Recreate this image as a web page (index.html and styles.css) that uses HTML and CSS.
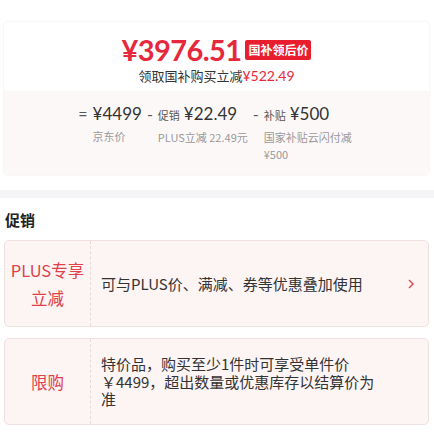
FILE: index.html
```html
<!DOCTYPE html>
<html lang="zh-CN">
<head>
<meta charset="utf-8">
<link rel="stylesheet" href="styles.css">
</head>
<body>
<div class="price-card">
  <div class="price-top">
    <div class="price-line">
      <span class="price">¥3976.51</span>
      <span class="badge">国补领后价</span>
    </div>
    <div class="subline">领取国补购买立减<span class="red">¥522.49</span></div>
  </div>
  <div class="price-bottom">
    <div class="calc">
      <span class="op">=</span>
      <div class="item">
        <div class="val">¥4499</div>
        <div class="lbl">京东价</div>
      </div>
      <span class="op">-</span>
      <div class="item">
        <div class="val"><span class="tag">促销</span>¥22.49</div>
        <div class="lbl">PLUS立减 22.49元</div>
      </div>
      <span class="op">-</span>
      <div class="item">
        <div class="val"><span class="tag">补贴</span>¥500</div>
        <div class="lbl">国家补贴云闪付减 ¥500</div>
      </div>
    </div>
  </div>
</div>
<div class="band"></div>
<div class="promo-title">促销</div>
<div class="promo">
  <div class="promo-left">PLUS专享<br>立减</div>
  <div class="promo-right">
    <span class="promo-text">可与PLUS价、满减、券等优惠叠加使用</span>
    <svg class="chev" width="8" height="12" viewBox="0 0 8 12"><path d="M2 2 L6 6 L2 10" fill="none" stroke="#e0404a" stroke-width="1.4"/></svg>
  </div>
</div>
<div class="promo">
  <div class="promo-left">限购</div>
  <div class="promo-right">
    <span class="promo-text narrow">特价品，购买至少1件时可享受单件价￥4499，超出数量或优惠库存以结算价为准</span>
  </div>
</div>
</body>
</html>
```

FILE: styles.css
```css
* { box-sizing: border-box; }
body {
  margin: 0;
  background: #fff;
  font-family: "Noto Sans CJK SC", "Noto Sans", sans-serif;
  color: #333;
  width: 434px;
}
.price-card {
  margin: 22px 5px 0 4px;
  border-radius: 4px;
  box-shadow: 0 0 2px rgba(0,0,0,0.12);
  overflow: hidden;
}
.price-top {
  background: #fff;
  padding: 9px 0 6px;
  display: flex;
  flex-direction: column;
  align-items: center;
}
.price-line {
  display: flex;
  align-items: center;
  gap: 4px;
  height: 36px;
}
.price {
  font-family: Lato, "Noto Sans", sans-serif;
  font-size: 29px;
  font-weight: 700;
  color: #e5283c;
  letter-spacing: -0.6px;
}
.badge {
  background: #e81e2e;
  color: #fff;
  font-size: 12px;
  font-weight: 700;
  height: 20px;
  line-height: 20px;
  padding: 0 3px;
  border-radius: 2px;
  margin-top: 2px;
}
.subline {
  font-size: 13px;
  line-height: 18px;
  color: #333;
}
.red {
  color: #e5283c;
  font-family: Lato, "Noto Sans", sans-serif;
  font-size: 14px;
}
.price-bottom {
  background: #fdf8f8;
  padding: 12px 0 12px;
}
.calc {
  display: flex;
  justify-content: center;
  align-items: flex-start;
}
.op {
  font-family: Lato, sans-serif;
  font-size: 16px;
  line-height: 22px;
  color: #555;
  margin: 0 5px;
}
.item {
  display: flex;
  flex-direction: column;
  max-width: 96px;
}
.val {
  font-family: Lato, "Noto Sans", sans-serif;
  font-size: 17px;
  line-height: 22px;
  color: #333;
  white-space: nowrap;
}
.tag {
  font-family: "Noto Sans CJK SC", sans-serif;
  font-size: 11px;
  color: #555;
  margin-right: 4px;
}
.lbl {
  font-size: 11px;
  line-height: 17px;
  color: #999;
  margin-top: 3px;
}
.band {
  height: 8px;
  background: #f5f5f7;
  margin-top: 15px;
}
.promo-title {
  font-size: 15px;
  font-weight: 700;
  color: #222;
  line-height: 20px;
  padding: 12px 5px 0;
}
.promo {
  margin: 10px 5px 0 4px;
  height: 87px;
  display: flex;
  background: #fdf4f4;
  border: 1px solid #f0e0e0;
  border-radius: 5px;
}
.promo + .promo { margin-top: 11px; }
.promo-left {
  width: 86px;
  flex: none;
  border-right: 1px dashed #ead8d8;
  display: flex;
  align-items: center;
  justify-content: center;
  text-align: center;
  font-size: 16.5px;
  line-height: 28px;
  color: #e0404a;
}
.promo-right {
  flex: 1;
  display: flex;
  align-items: center;
  justify-content: space-between;
  padding: 0 13px 0 10px;
}
.promo-text {
  font-size: 15px;
  line-height: 17.5px;
  color: #333;
}
.promo-text.narrow { width: 285px; }
.chev { flex: none; }
```
